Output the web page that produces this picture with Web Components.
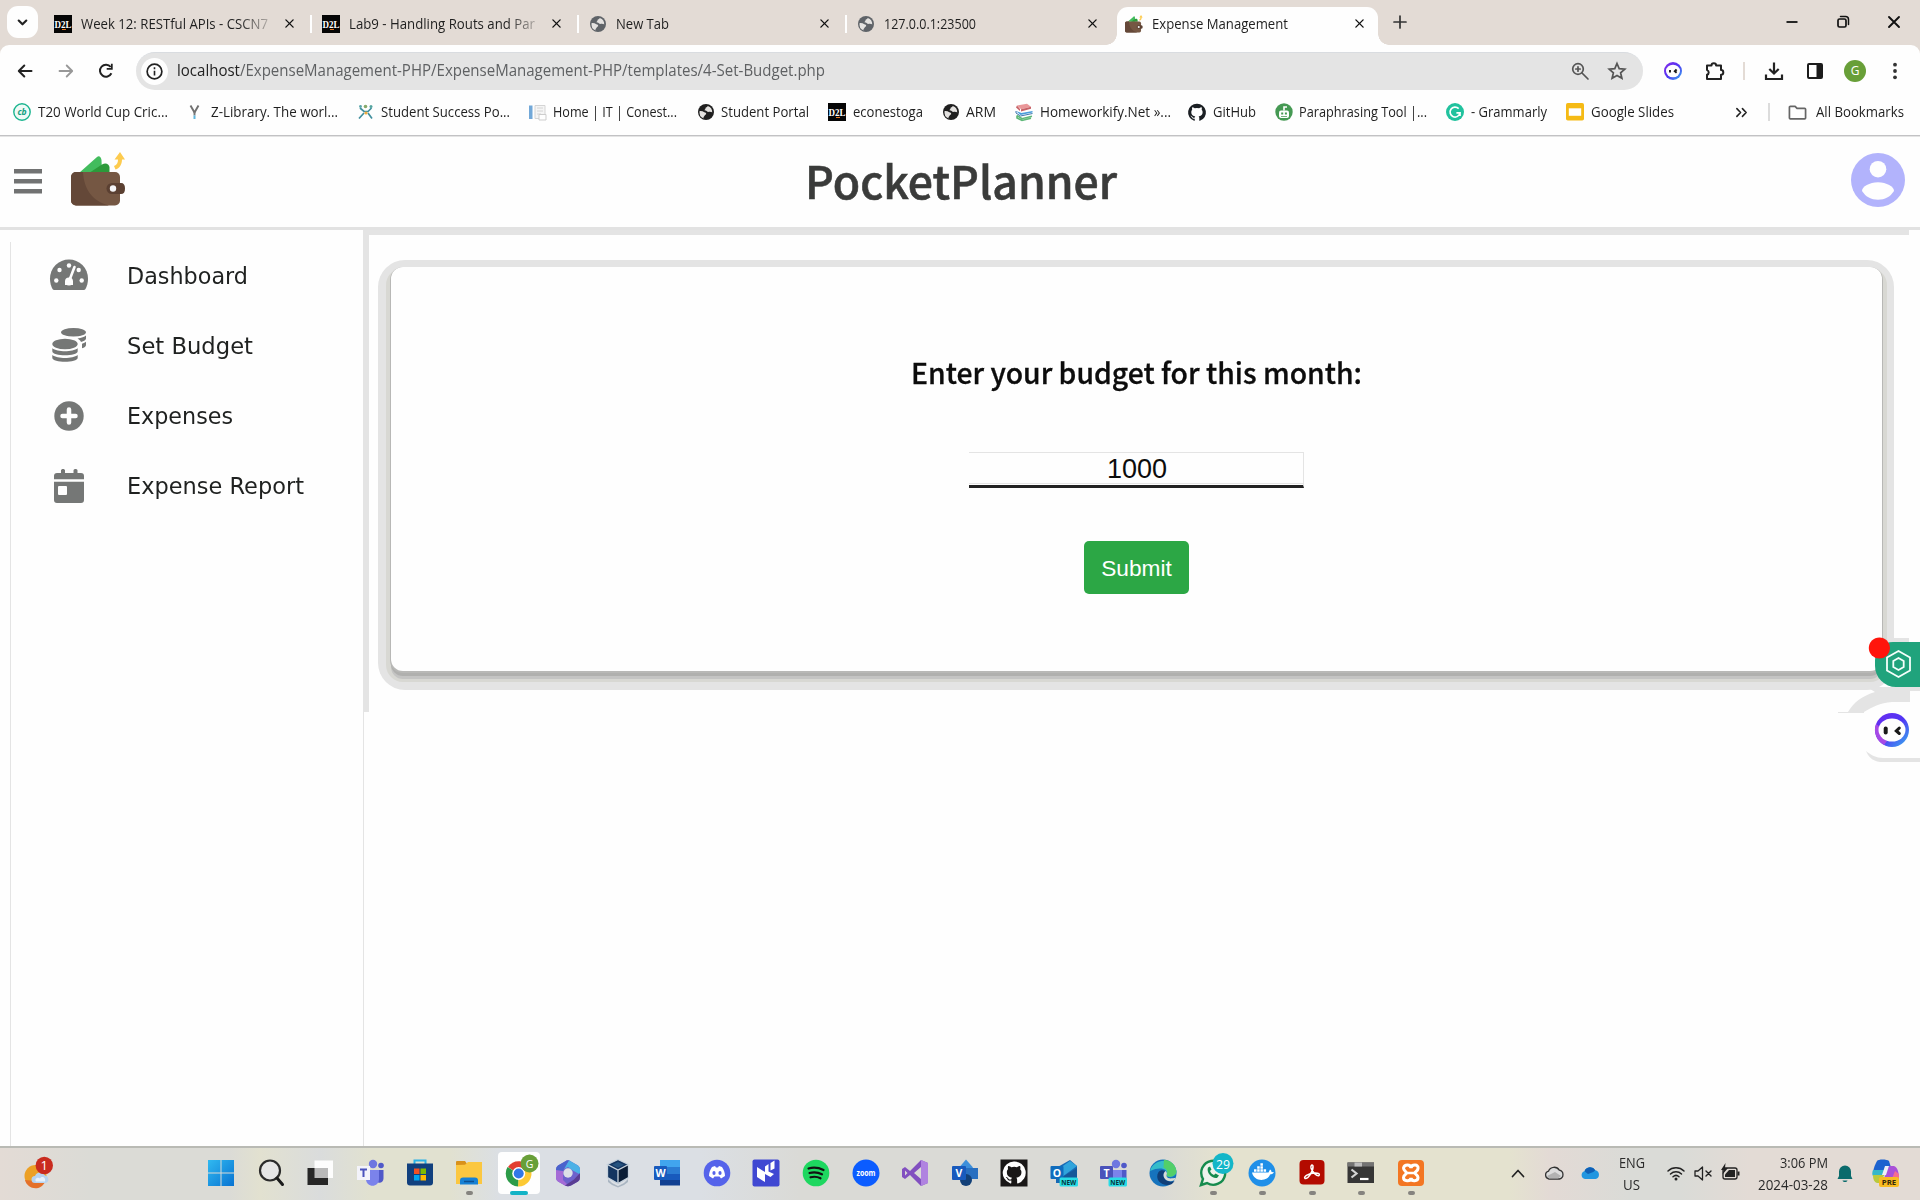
<!DOCTYPE html>
<html lang="en">
<head>
    <meta charset="UTF-8" />
    <meta name="viewport" content="width=device-width, initial-scale=1.0" />
    <title>Expense Management</title>
    <style>
        html, body {
            margin: 0;
            height: 100%;
            overflow: hidden;
            background: #fefefe;
            font-family: "Open Sans", "Noto Sans", sans-serif;
            color: #1f1f1f;
        }
    </style>
</head>
<body>
    <desktop-screen></desktop-screen>

    <!-- Whole screen: browser window above the taskbar -->
    <template id="desktop-screen-template">
        <style>
            :host { display: flex; flex-direction: column; width: 1920px; height: 1200px; }
            page-body { flex: 1; min-height: 0; }
        </style>
        <tab-strip></tab-strip>
        <tool-bar></tool-bar>
        <bookmark-bar></bookmark-bar>
        <page-header></page-header>
        <page-body></page-body>
        <task-bar></task-bar>
    </template>

    <!-- Tab strip -->
    <template id="tab-strip-template">
        <style>
            :host { display: flex; height: 45px; background: #e3dbd5; box-sizing: border-box; }
            .search { width: 31px; height: 32px; margin: 6px 8px 0 7px; border-radius: 11px; background: #fefefe; display: flex; align-items: center; justify-content: center; }
            .new { margin: 13px 0 0 7px; }
            .window { margin-left: auto; display: flex; gap: 33px; padding: 13px 17px 0 0; }
        </style>
        <div class="search"><app-icon name="chevronDown" size="13"></app-icon></div>
        <browser-tab icon="d2l" w="187" fade>Week 12: RESTful APIs - CSCN7</browser-tab>
        <browser-tab icon="d2l" w="186" fade>Lab9 - Handling Routs and Par</browser-tab>
        <browser-tab icon="globe" w="53" tone="#5f6368">New Tab</browser-tab>
        <browser-tab icon="globe" w="92" tone="#5f6368" last>127.0.0.1:23500</browser-tab>
        <browser-tab icon="wallet" w="136" active>Expense Management</browser-tab>
        <app-icon class="new" name="plus" size="18"></app-icon>
        <div class="window">
            <app-icon name="minimize" size="18"></app-icon>
            <app-icon name="restore" size="18"></app-icon>
            <app-icon name="close" size="18"></app-icon>
        </div>
    </template>

    <template id="browser-tab-template">
        <style>
            :host { display: block; width: 267.7px; height: 45px; font-size: 13.8px; }
            .tab { display: flex; align-items: center; height: 38px; margin-top: 7px; box-sizing: border-box; padding: 0 0 5px 8px; }
            .label { margin-left: 9px; flex: 1; overflow: hidden; line-height: 20px; }
            :host([fade]) .label { -webkit-mask-image: linear-gradient(90deg, #000 158px, rgba(0,0,0,.25) 187px); mask-image: linear-gradient(90deg, #000 158px, rgba(0,0,0,.25) 187px); }
            .bar { width: 2px; height: 18px; background: #fefefe; margin: 0 2px 0 14px; }
            :host([last]) .bar, :host([active]) .bar { visibility: hidden; }
            :host([active]) .tab {
                position: relative; width: 261px; background: #fefefe; border-radius: 11px 11px 0 0;
            }
            :host([active]) .tab::before, :host([active]) .tab::after { content: ""; position: absolute; bottom: 0; width: 11px; height: 11px; }
            :host([active]) .tab::before { left: -11px; background: radial-gradient(circle at 0 0, transparent 10.5px, #fefefe 11px); }
            :host([active]) .tab::after { right: -11px; background: radial-gradient(circle at 100% 0, transparent 10.5px, #fefefe 11px); }
            :host([active]) .bar { display: none; }
            :host([active]) .x { margin-right: 12px; }
        </style>
        <div class="tab">
            <app-icon class="fav" size="18"></app-icon>
            <div class="label"><fit-text><slot></slot></fit-text></div>
            <app-icon class="x" name="close" size="13"></app-icon>
            <div class="bar"></div>
        </div>
    </template>

    <!-- Address toolbar -->
    <template id="tool-bar-template">
        <style>
            :host { display: block; height: 45px; background: #e3dbd5; }
            .row { display: flex; align-items: center; height: 45px; background: #fefefe; border-radius: 9px 9px 0 0; box-sizing: border-box; padding: 7px 15px 0 15px; }
            .nav { display: flex; gap: 20.5px; }
            .address { display: flex; align-items: center; width: 1507px; height: 38px; box-sizing: border-box; margin-left: 20px; border-radius: 19px; background: #e4e4e4; border-top: 1px solid #d9dce0; padding: 0 16px 1px 5px; }
            .info { width: 27px; height: 27px; border-radius: 50%; background: #fefefe; display: flex; align-items: center; justify-content: center; }
            .url { flex: 1; margin: -2px 0 0 9px; font-size: 16px; line-height: 22px; color: #5f6163; }
            .url b { font-weight: 400; color: #222; }
            .tools { margin-left: auto; display: flex; align-items: center; }
            .bar { width: 2px; height: 18px; background: #e3dbd5; }
            .g { width: 22px; height: 22px; border-radius: 50%; background: #689f38; color: #fff; font-size: 12px; line-height: 22px; text-align: center; }
        </style>
        <div class="row">
            <div class="nav">
                <app-icon name="back" size="20"></app-icon>
                <app-icon name="forward" size="20"></app-icon>
                <app-icon name="reload" size="20"></app-icon>
            </div>
            <div class="address">
                <div class="info"><app-icon name="info" size="17"></app-icon></div>
                <div class="url"><fit-text w="648"><b>localhost</b>/ExpenseManagement-PHP/ExpenseManagement-PHP/templates/4-Set-Budget.php</fit-text></div>
                <app-icon name="zoomIn" size="18"></app-icon>
                <app-icon name="star" size="20" style="margin-left: 18px"></app-icon>
            </div>
            <div class="tools">
                <app-icon name="bot" size="18"></app-icon>
                <app-icon name="puzzle" size="22" style="margin-left: 21px"></app-icon>
                <div class="bar" style="margin-left: 18px"></div>
                <app-icon name="download" size="20" style="margin-left: 19px"></app-icon>
                <app-icon name="panel" size="18" style="margin-left: 22px"></app-icon>
                <div class="g" style="margin-left: 20px">G</div>
                <app-icon name="dots" size="20" style="margin-left: 19px"></app-icon>
            </div>
        </div>
    </template>

    <!-- Bookmarks -->
    <template id="bookmark-bar-template">
        <style>
            :host { display: flex; align-items: center; height: 47px; box-sizing: border-box; background: #fefefe; border-bottom: 1px solid #e4e4e4; box-shadow: inset 0 -1px 0 #c2c2c4; padding: 0 0 2px 13px; }
            .end { display: flex; align-items: center; margin-left: auto; padding-right: 16px; font-size: 13.8px; }
            .bar { width: 2px; height: 18px; background: #dcdcdc; margin: 0 18px 0 20px; }
            .all { margin: -1px 0 0 9px; line-height: 20px; }
        </style>
        <book-mark icon="cricket" slotw="173" w="130" gap="7">T20 World Cup Cric...</book-mark>
        <book-mark icon="zlib" slotw="171" w="127" gap="11">Z-Library. The worl...</book-mark>
        <book-mark icon="success" slotw="172" w="129" gap="9">Student Success Po...</book-mark>
        <book-mark icon="home" slotw="168" w="124" gap="6">Home | IT | Conest...</book-mark>
        <book-mark icon="globe" slotw="131" w="88" gap="6">Student Portal</book-mark>
        <book-mark icon="d2l" slotw="114" w="70" gap="7">econestoga</book-mark>
        <book-mark icon="globe" slotw="73" w="30" gap="6">ARM</book-mark>
        <book-mark icon="books" slotw="173" w="131" gap="7">Homeworkify.Net »...</book-mark>
        <book-mark icon="github" slotw="87" w="43" gap="7">GitHub</book-mark>
        <book-mark icon="robot" slotw="171" w="128" gap="6">Paraphrasing Tool |...</book-mark>
        <book-mark icon="grammarly" slotw="120" w="76" gap="7">- Grammarly</book-mark>
        <book-mark icon="slides" slotw="120" w="83" gap="7">Google Slides</book-mark>
        <div class="end">
            <app-icon name="more" size="13"></app-icon>
            <div class="bar"></div>
            <app-icon name="folderLine" size="19"></app-icon>
            <div class="all"><fit-text w="88">All Bookmarks</fit-text></div>
        </div>
    </template>

    <template id="book-mark-template">
        <style>
            :host { display: flex; align-items: center; font-size: 13.8px; line-height: 20px; flex: none; }
            fit-text { margin-top: -1px; }
        </style>
        <app-icon size="18"></app-icon>
        <fit-text><slot></slot></fit-text>
    </template>

    <!-- Site header -->
    <template id="page-header-template">
        <style>
            :host { display: grid; grid-template-columns: 1fr auto 1fr; align-items: center; height: 93px; box-sizing: border-box; border-bottom: 3px solid #e2e2e2; background: #fefefe; padding: 0 15px 5px 14px; }
            .left { display: flex; align-items: center; }
            .left app-icon:first-child { margin-top: 2px; }
            .left app-icon + app-icon { margin: -1px 0 0 29px; }
            h1 { margin: 0 0 0 3px; font: 500 45px/60px "Noto Sans CJK SC", "Open Sans", sans-serif; color: #3a3b3a; -webkit-text-stroke: .6px #3a3b3a; }
            .user { justify-self: end; margin-top: 0; }
        </style>
        <div class="left">
            <app-icon name="menu" size="28"></app-icon>
            <app-icon name="wallet" size="55"></app-icon>
        </div>
        <h1><fit-text w="312">PocketPlanner</fit-text></h1>
        <app-icon class="user" name="user" size="54"></app-icon>
    </template>

    <!-- Sidebar, budget card and floating widgets -->
    <template id="page-body-template">
        <style>
            :host { display: flex; position: relative; background: #fefefe; }
            side-menu { width: 363px; flex: none; }
            main { flex: 1; border-left: 1px solid #e4e4e4; }
            section { width: 1545px; height: 482px; box-sizing: border-box; border-left: 5px solid #e4e4e4; border-top: 5px solid #e4e4e4; padding: 25px 0 0 9px; }
            chat-widgets { position: absolute; right: 0; top: 400px; }
        </style>
        <side-menu></side-menu>
        <main>
            <section><budget-card></budget-card></section>
        </main>
        <chat-widgets></chat-widgets>
    </template>

    <template id="side-menu-template">
        <style>
            :host { display: flex; }
            nav { flex: 1; margin: 12px 0 0 10px; border-left: 1px solid #e4e4e4; padding: 3px 0 0 34px; display: flex; flex-direction: column; gap: 10.3px; }
        </style>
        <nav>
            <menu-entry icon="gauge" w="121">Dashboard</menu-entry>
            <menu-entry icon="coins" w="126">Set Budget</menu-entry>
            <menu-entry icon="plusCircle" w="106">Expenses</menu-entry>
            <menu-entry icon="calendar" w="177">Expense Report</menu-entry>
        </nav>
    </template>

    <template id="menu-entry-template">
        <style>
            :host { display: flex; align-items: center; height: 60px; font: 23px/30px "DejaVu Sans", sans-serif; color: #1f2120; }
            app-icon { margin: 0 38px 0 4px; }
            fit-text { margin-top: 1px; }
        </style>
        <app-icon size="40"></app-icon>
        <fit-text><slot></slot></fit-text>
    </template>

    <template id="budget-card-template">
        <style>
            :host { display: block; width: 1516px; height: 430px; box-sizing: border-box; background: #e4e4e4; border-radius: 27px; padding: 7px 12px 19px 13px; }
            form { height: 404px; border-radius: 12px; background: #fefefe; display: flex; flex-direction: column; align-items: center;
                box-shadow: 0 1px 0 1px #b8b8b6, 0 5px 0 0 #b0b0ae, 0 8px 0 0 #c4c4c3, 0 6px 0 5px #d8d8d3; }
            h2 { margin: 85px 0 0; font: 500 28.5px/40px "Noto Sans CJK SC", "Open Sans", sans-serif; color: #0c0c0c; -webkit-text-stroke: .3px #0c0c0c; }
            input { width: 335px; height: 36px; margin: 60px 0 0; box-sizing: border-box; border: 1px solid #e4e4e4; border-left: 0; border-bottom: 3px solid #222; border-radius: 0; outline: 0; padding: 1px 0 0 2px; background: #fefefe; box-shadow: inset 0 -1px 0 #fefefe, inset 0 -2px 0 #e4e4e4; text-align: center; font: 27px/30px "Liberation Sans", Arial, sans-serif; color: #0c0c0c; }
            button { width: 105px; height: 53px; margin: 53px 0 0; border: 0; border-radius: 5px; padding: 1px 0 0; background: #2ca745; color: #fff; font: 22.7px/52px "Liberation Sans", Arial, sans-serif; }
        </style>
        <form>
            <h2><fit-text w="451">Enter your budget for this month:</fit-text></h2>
            <input type="text" value="1000" />
            <button type="button">Submit</button>
        </form>
    </template>

    <template id="chat-widgets-template">
        <style>
            :host { display: block; width: 90px; height: 140px; }
            svg { display: block; }
        </style>
        <svg width="90" height="140" viewBox="1830 630 90 140">
            <path d="M1888 638h21v4h-21zM1910 687h10v4h-10z" fill="#e4e4e4" />
            <path d="M1848 712c6-10 14-16 27-20l-8-5h43v15h-18c-12 1-20 5-28 10z" fill="#e4e4e4" />
            <path d="M1838 712.500h26" stroke="#e4e4e4" />
            <path d="M1866 751c5 4 10 7 17 7h37v4h-40c-8-1-12-6-14-11z" fill="#e4e4e4" />
            <path d="M1920 642h-27a18 18 0 0 0-18 18v6a21 21 0 0 0 21 21h24z" fill="#20a37c" />
            <circle cx="1879.400" cy="648" r="10.600" fill="#ff150c" />
            <path d="M1898.500 651l11.500 6.500v13L1898.500 677l-11.500-6.500v-13zM1898.500 658l5.200 3v6l-5.200 3-5.200-3v-6z" fill="none" stroke="#f5fffb" stroke-width="1.800" />
            <defs>
                <linearGradient id="ring" x1="0" y1="0" x2="1" y2="1">
                    <stop offset="0" stop-color="#6b2df0" /><stop offset=".5" stop-color="#5135f4" /><stop offset="1" stop-color="#36b4ee" />
                </linearGradient>
            </defs>
            <circle cx="1892" cy="730" r="17" fill="url(#ring)" />
            <path d="M1876 724a17 17 0 0 0 8 21l3-4c-5-3-8-8-7-14z" fill="#a64ae6" />
            <ellipse cx="1892" cy="730" rx="13.500" ry="11.500" fill="#fefefe" />
            <path d="M1885.700 728.500v4" stroke="#191919" stroke-width="4" stroke-linecap="round" />
            <path d="M1899.300 728l-3 3 3 2.500" fill="none" stroke="#191919" stroke-width="3" stroke-linecap="round" />
        </svg>
    </template>

    <!-- Windows taskbar -->
    <template id="task-bar-template">
        <style>
            :host { display: flex; align-items: center; height: 54px; box-sizing: border-box; border-top: 2px solid #b9bab4; padding-bottom: 2px; color: #2a2a2a;
                background: linear-gradient(90deg, #e3dbd5 0, #dbdbd6 90px, #dbdbd6 230px, #e2e1d0 260px, #dadcdc 320px, #e1e1d0 370px, #e1e1d0 450px, #dbdfe4 500px, #dbdfe4 700px, #dadad6 800px, #dadad6 1160px, #e4e2cf 1220px, #e4e2cf 1510px, #e3dad5 1550px, #dadbd7 1630px, #dadbd7 1680px, #e3dbd5 1750px); }
            .weather { width: 196.5px; box-sizing: border-box; padding-left: 21px; }
            .apps { display: flex; width: 1239px; }
            .tray { display: flex; align-items: center; flex: 1; margin-left: 73px; font-size: 14.5px; line-height: 22px; }
            .lang { text-align: center; width: 28px; margin-left: 18px; padding-top: 2px; }
            .clock { display: flex; flex-direction: column; align-items: flex-end; width: 73px; margin-left: 15px; padding-top: 1px; }
        </style>
        <div class="weather"><app-icon name="weather" size="34"></app-icon></div>
        <div class="apps">
            <task-item icon="start"></task-item>
            <task-item icon="search"></task-item>
            <task-item icon="taskview"></task-item>
            <task-item icon="teams"></task-item>
            <task-item icon="store"></task-item>
            <task-item icon="explorer" open></task-item>
            <task-item icon="chrome" active></task-item>
            <task-item icon="m365"></task-item>
            <task-item icon="vbox"></task-item>
            <task-item icon="word"></task-item>
            <task-item icon="discord"></task-item>
            <task-item icon="nx"></task-item>
            <task-item icon="spotify"></task-item>
            <task-item icon="zoom"></task-item>
            <task-item icon="vs"></task-item>
            <task-item icon="visio"></task-item>
            <task-item icon="githubBox"></task-item>
            <task-item icon="outlook"></task-item>
            <task-item icon="teamsNew"></task-item>
            <task-item icon="edge"></task-item>
            <task-item icon="whatsapp" open></task-item>
            <task-item icon="docker" open></task-item>
            <task-item icon="acrobat" open></task-item>
            <task-item icon="terminal" open></task-item>
            <task-item icon="xampp" open></task-item>
        </div>
        <div class="tray">
            <app-icon name="chevronUp" size="18"></app-icon>
            <app-icon name="cloudGrey" size="20" style="margin-left: 17px"></app-icon>
            <app-icon name="cloudBlue" size="20" style="margin-left: 16px"></app-icon>
            <div class="lang"><fit-text w="26">ENG</fit-text><br /><fit-text w="17">US</fit-text></div>
            <app-icon name="wifi" size="20" style="margin-left: 20px"></app-icon>
            <app-icon name="mute" size="20" style="margin-left: 7px"></app-icon>
            <app-icon name="battery" size="20" style="margin-left: 7px"></app-icon>
            <div class="clock"><fit-text w="48">3:06 PM</fit-text><fit-text w="70">2024-03-28</fit-text></div>
            <app-icon name="bell" size="20" style="margin-left: 7px"></app-icon>
            <app-icon name="copilot" size="30" style="margin-left: 16px"></app-icon>
        </div>
    </template>

    <template id="task-item-template">
        <style>
            :host { display: flex; flex: 1; justify-content: center; }
            .tile { position: relative; width: 42px; height: 42px; display: flex; align-items: center; justify-content: center; border-radius: 4px; }
            :host([active]) .tile { background: #fefefe; }
            .mark { display: none; position: absolute; bottom: -1px; left: 18px; width: 7px; height: 4px; border-radius: 2px; background: #85837f; }
            :host([open]) .mark { display: block; }
            :host([active]) .mark { display: block; left: 12px; width: 18px; background: #13b3c6; }
        </style>
        <div class="tile"><app-icon size="32"></app-icon><div class="mark"></div></div>
    </template>

    <script>
        const line = 'fill="none" stroke-linecap="round" stroke-linejoin="round"';

        // Small helpers shared by several glyphs
        const d2l = '<rect width="18" height="18" fill="#050505"/><text x="9" y="12.500" text-anchor="middle" textLength="17" lengthAdjust="spacingAndGlyphs" font-family="Liberation Serif" font-weight="700" font-size="9.500" fill="#fff">D2L</text><path d="M8 14.500h4" stroke="#e87722"/>';
        const octocat = '<path d="M9 .8a8.300 8.300 0 0 0-2.700 16.200c.4.100.6-.2.6-.4v-1.700c-2.300.5-2.800-1-2.800-1-.4-1-.9-1.200-.9-1.200-.8-.5 0-.5 0-.5.8.1 1.300.9 1.300.9.700 1.300 2 .9 2.400.7.100-.6.300-.9.500-1.100-1.800-.2-3.800-.9-3.800-4.100 0-.9.300-1.700.9-2.200-.1-.3-.4-1.100.1-2.300 0 0 .7-.2 2.300.9a8 8 0 0 1 4.200 0c1.600-1.100 2.300-.9 2.300-.9.500 1.200.2 2 .1 2.300.5.600.9 1.300.9 2.200 0 3.200-2 3.900-3.800 4.100.3.300.6.800.6 1.500v2.400c0 .2.200.5.600.4A8.300 8.300 0 0 0 9 .8z"/>';
        const cloud = 'M5 16a4 4 0 0 1-.5-7.800 6 6 0 0 1 10.800-1A4.500 4.500 0 0 1 15.500 16z';
        const people = '<circle cx="19" cy="7" r="4.200" fill="#6e77e0"/><circle cx="27" cy="8.500" r="2.800" fill="#5059c9"/><path d="M22 13h7.500v8c0 6-7.500 6-7.500 2z" fill="#5059c9"/><path d="M12 13h13v9c0 9-13 9-13 0z" fill="#7b83eb"/>';

        // name: [viewBox size, markup]
        const ICONS = {
            chevronDown: [12, `<path d="M2.500 4.200L6 7.700l3.500-3.500" ${line} stroke="#222" stroke-width="2"/>`],
            plus: [18, `<path d="M9 3v12M3 9h12" ${line} stroke="#333" stroke-width="1.700"/>`],
            close: [18, `<path d="M4 4l10 10M14 4L4 14" ${line} stroke="#111" stroke-width="1.900"/>`],
            minimize: [18, '<path d="M3.500 9h11" stroke="#111" stroke-width="1.800"/>'],
            restore: [18, `<rect x="4" y="6" width="8" height="8" rx="1.500" ${line} stroke="#111" stroke-width="1.700"/><path d="M6.500 3.500h5a3 3 0 0 1 3 3v5" ${line} stroke="#111" stroke-width="1.500"/>`],
            back: [20, `<path d="M16.500 10H4M9.300 4.500L3.800 10l5.500 5.500" ${line} stroke="#222" stroke-width="2"/>`],
            forward: [20, `<path d="M3.500 10H16M10.700 4.500l5.500 5.500-5.500 5.500" ${line} stroke="#989898" stroke-width="1.800"/>`],
            reload: [20, '<path d="M15.400 12.300A6 6 0 1 1 14.700 6" fill="none" stroke="#222" stroke-width="2"/><path d="M16.700 2.800v6h-6v-1.800h4.200V2.800z" fill="#222"/>'],
            info: [18, '<circle cx="9" cy="9" r="7.800" fill="none" stroke="#222" stroke-width="1.800"/><path d="M9 8.200v5M9 4.600v1.900" stroke="#222" stroke-width="1.700"/>'],
            zoomIn: [18, `<circle cx="7" cy="7" r="5.300" ${line} stroke="#555" stroke-width="1.700"/><path d="M11 11l6 6M7 4.800v4.400M4.800 7h4.400" ${line} stroke="#555" stroke-width="1.700"/>`],
            star: [20, '<path d="M10 2.500l2.200 5.100 5.600.5-4.200 3.700 1.300 5.500L10 14.400l-4.900 2.900 1.300-5.500-4.200-3.700 5.600-.5z" fill="none" stroke="#555" stroke-width="1.700"/>'],
            bot: [18, '<defs><linearGradient id="b" x1="0" y1="0" x2="1" y2="1"><stop offset="0" stop-color="#8a2be8"/><stop offset=".5" stop-color="#5135f4"/><stop offset="1" stop-color="#36b4ee"/></linearGradient></defs><circle cx="9" cy="9" r="9" fill="url(#b)"/><ellipse cx="9" cy="9" rx="7" ry="6.300" fill="#fefefe"/><path d="M6 8v2.600M12.600 7.500L10.800 9.300l1.800 1.500" fill="none" stroke="#191919" stroke-width="1.900"/>'],
            puzzle: [22, `<path d="M4 5.500h4.500a2.300 2.300 0 0 1 4.600 0H18v4.600a2.300 2.300 0 0 1 0 4.600V19H4v-4.300a2.400 2.400 0 0 0 0-4.600z" ${line} stroke="#222" stroke-width="2"/>`],
            download: [20, '<path d="M10 1.500v10.500M5.300 8l4.700 4.500L14.700 8M2 13.500V18h16v-4.500" fill="none" stroke="#222" stroke-width="2.200"/>'],
            panel: [18, '<rect x="2" y="2" width="14" height="14" rx="1" fill="none" stroke="#1c1c1c" stroke-width="2"/><path d="M10.500 2H16v14h-5.500z" fill="#1c1c1c"/>'],
            dots: [20, '<circle cx="10" cy="3.700" r="1.900" fill="#333"/><circle cx="10" cy="10" r="1.900" fill="#333"/><circle cx="10" cy="16.300" r="1.900" fill="#333"/>'],
            more: [14, `<path d="M2 2.800L6 7l-4 4.200M8 2.800L12 7l-4 4.200" ${line} stroke="#222" stroke-width="1.700"/>`],
            folderLine: [20, `<path d="M1.500 4.500a1 1 0 0 1 1-1h5l2 2.200h8a1 1 0 0 1 1 1v9a1 1 0 0 1-1 1h-15a1 1 0 0 1-1-1z" ${line} stroke="#666" stroke-width="1.800"/>`],
            d2l: [18, d2l],
            globe: [18, '<circle cx="9" cy="9" r="8" fill="currentColor"/><path d="M2.600 8c1.900-.2 3.500.2 4.700 1.200 1.500.1 2.300 1 1.700 2.200-1.400.2-1.300 1.500-2 2-.4.700-.9 1.400-.3 2A6.600 6.600 0 0 1 2.600 8zM10.800 2.900c-.6 1.300-1.900 1-2.300 2.200.5 1.300-1.300 1.400-.8 2.400 1.600-.2 2 .5 2.700 1.300 1.600.3 2.800-.4 4.800.8a6.600 6.600 0 0 0-4.400-6.700z" fill="#e4e2e0"/>'],
            wallet: [55, '<path d="M8 21L26 5c2-2 4 0 4.500 3L31 21z" fill="#42bc5d"/><path d="M18 21L31 12.500c4-2.500 7.500 0 7.500 3V21z" fill="#2c9a3a"/><path d="M43 14c3-1 4-3.500 4-6.500h-3.500L49 0l5 7.500h-3c0 5-2.500 9-6.500 10z" fill="#fdcb4e"/><rect y="20" width="49" height="33.500" rx="5" fill="#755743"/><path d="M5 20h7c1 17 9 29 26 33.500H5a5 5 0 0 1-5-5V25a5 5 0 0 1 5-5z" fill="#644838"/><path d="M41 31h9q4 0 4 5.500t-4 5.500h-9a5.500 5.500 0 0 1 0-11z" fill="#5b4032"/><circle cx="42" cy="36.500" r="3.200" fill="#f5f5f7"/>'],
            cricket: [18, '<circle cx="9" cy="9" r="8.200" fill="#effaf7" stroke="#1bb58f" stroke-width="1.400"/><text x="9" y="12" text-anchor="middle" font-family="Open Sans" font-style="italic" font-weight="700" font-size="8.500" fill="#10a07f">cb</text>'],
            zlib: [18, '<g transform="translate(2.500)"><path d="M2 2.500L6 9.500l4-7" fill="none" stroke="#707070" stroke-width="1.900"/><path d="M6 9v3.500" stroke="#777" stroke-width="1.900"/><path d="M6 12.500v3.500" stroke="#5db6df" stroke-width="2"/></g>'],
            success: [18, '<path d="M2 15.500l5-5.500M11 10l4 5.500M3 5l4 3.500h4l3.500-3.500" fill="none" stroke="#418f9d" stroke-width="1.700"/><circle cx="8.500" cy="3.500" r="1.800" fill="#86a96b"/><circle cx="3.500" cy="3.500" r="1.400" fill="#5ba5aa"/><circle cx="14" cy="3.500" r="1.500" fill="#54a49e"/><circle cx="9" cy="10" r="1.600" fill="#f0ab3d"/>'],
            home: [18, '<path d="M0 2.500h3.500V16H0z" fill="#72a8d8"/><path d="M6 2.500h10v13H6zM8 5h6M8 8h6M8 11h4" fill="#f5f5f5" stroke="#d4d4d4"/><path d="M10 11.500h7V17h-7z" fill="#fefefe" stroke="#cdcdcd"/>'],
            books: [18, '<path d="M2 2.500L12 .8l4 3-10 2.400z" fill="#e99698"/><path d="M2 2.500L5 6v2L1 4.500zM6 6.200l10-2.400v2L6 8.500z" fill="#c76267"/><path d="M1 8l4.500 4 12-2.500V8L6.500 10z" fill="#499cdc"/><path d="M1 8v2l4.500 3 12-2.500" fill="none" stroke="#3d77ad"/><path d="M2 12.500l5 3.200 10-2.500M2 12.500V15l5 2.500 9-2.300" fill="none" stroke="#5fb879" stroke-width="1.600"/>'],
            github: [18, `<g fill="#1b1f23" transform="translate(-.5 0) scale(1.050)">${octocat}</g>`],
            robot: [18, '<circle cx="9" cy="9" r="8.700" fill="#459953"/><rect x="4" y="7.500" width="10" height="7.500" rx="2" fill="#fff"/><path d="M9 7.500V4h3" fill="none" stroke="#fff" stroke-width="1.600"/><path d="M6.200 9.500h2v2h-2zM9.900 9.500h2v2h-2zM6 13h6v.8H6z" fill="#459953"/>'],
            grammarly: [18, '<circle cx="9" cy="9" r="9" fill="#21c29e"/><path d="M12.700 5.600a5 5 0 1 0 1.300 4.200h-3.600M14 9.500v3.600" fill="none" stroke="#fff" stroke-width="1.700"/>'],
            slides: [18, '<rect width="18" height="17.500" rx="1.800" fill="#f5ba15"/><path d="M2.800 5.300h12.400v7.500H2.800z" fill="#fefefe"/>'],
            menu: [28, '<path d="M0 2h28v4.500H0zM0 12h28v4.500H0zM0 22h28v4.500H0z" fill="#717272"/>'],
            user: [54, '<circle cx="27" cy="27" r="27" fill="#b2b3fc"/><circle cx="27" cy="16.200" r="8.300" fill="#fefefe"/><path d="M27 29.300c8.500 0 16 4.500 16 8.700-4 6-9 8.700-16 8.700S15 44 11 38c0-4.200 7.500-8.700 16-8.700z" fill="#fefefe"/>'],
            gauge: [40, '<path d="M1 23.500a19 19 0 0 1 38 0c0 4-1 7.500-2.500 10.500-.4.700-1 1-1.700 1H5.200c-.7 0-1.300-.3-1.700-1C2 31 1 27.500 1 23.500z" fill="#757776"/><g fill="#fefefe"><circle cx="20" cy="10.500" r="2.200"/><circle cx="10.500" cy="15" r="2.200"/><circle cx="29.700" cy="15" r="2.200"/><circle cx="7.300" cy="25.500" r="2.200"/><circle cx="32.700" cy="25.500" r="2.200"/><circle cx="20" cy="26.500" r="4"/><path d="M16 26h8v4h-8z"/></g><path d="M20.500 25l5-13" stroke="#fefefe" stroke-width="2.600" stroke-linecap="round"/>'],
            coins: [40, '<g fill="#757776"><ellipse cx="24.500" cy="7.300" rx="12.500" ry="4.300"/><path d="M28.500 13.500c4-.5 7-1.500 8.500-2.900v2.900c0 1.500-2 2.700-5 3.400-.7-1.500-2-2.600-3.500-3.400zM33 18.800c1.800-.5 3.200-1.200 4-2v3.200c0 1.500-1.600 2.700-4 3.300z"/><ellipse cx="16" cy="19" rx="12.700" ry="5.300"/><path d="M3.300 23.300c5 4 20.400 4 25.400 0v2.900c0 5.500-25.400 5.500-25.400 0zM3.300 30c5 4 20.400 4 25.400 0v2.700c0 5.500-25.400 5.500-25.400 0z"/></g>'],
            plusCircle: [40, '<circle cx="20" cy="20" r="14.700" fill="#757776"/><path d="M20 13.500v13M13.500 20h13" stroke="#fefefe" stroke-width="4.500" stroke-linecap="round"/>'],
            calendar: [40, '<path d="M12 4.500c0-2 4-2 4 0V7h8.500V4.500c0-2 4-2 4 0V7H32a3 3 0 0 1 3 3v3.300H5V10a3 3 0 0 1 3-3h4zM5 15.700h30v18.300a3 3 0 0 1-3 3H8a3 3 0 0 1-3-3z" fill="#757776"/><rect x="9" y="20" width="9" height="9" rx="1" fill="#fefefe"/>'],
            weather: [34, '<circle cx="14.500" cy="20" r="11" fill="#eca025"/><path d="M4 24c2 9 15 12 20 2z" fill="#e4702a"/><path d="M14 27a3.500 3.500 0 0 1 0-7 5.500 5.500 0 0 1 10-.5c4 0 5 7.500 0 7.500z" fill="#b7d3f0"/><path d="M15 25.500c-2-3 2-5 4-3 2-3 6-1 5 3z" fill="#e8f1fb"/><circle cx="23.300" cy="9.500" r="8.700" fill="#c92b1f"/><text x="23.300" y="14" text-anchor="middle" font-family="Open Sans" font-size="13" fill="#fff">1</text>'],
            start: [32, '<defs><linearGradient id="s" x1="0" y1="0" x2="1" y2="1"><stop stop-color="#31b9f0"/><stop offset="1" stop-color="#0873d2"/></linearGradient></defs><path d="M3 3h12.500v12.500H3zM16.500 3H29v12.500H16.500zM3 16.500h12.500V29H3zM16.500 16.500H29V29H16.500z" fill="url(#s)"/>'],
            search: [32, `<circle cx="15" cy="13.500" r="10" fill="#e6e6e6" stroke="#2b2b2b" stroke-width="2.200"/><path d="M22 21l5.500 6.500" ${line} stroke="#1b1b1b" stroke-width="3"/>`],
            taskview: [32, '<path d="M10.500 3.500H29v17.500H10.500z" fill="#fdfdfd"/><path d="M3.500 11H24v17H3.500z" fill="#262626"/><path d="M10.500 11H24v10H10.500z" fill="#b9b9b9"/>'],
            teams: [32, people + '<path d="M3 9h13v14H3z" fill="#f3f3fa"/><path d="M6 12.500h7M9.500 12.500V20" stroke="#4b53bc" stroke-width="2"/>'],
            store: [32, '<path d="M10.500 8V3.500h11V8" fill="none" stroke="#2bb2e8" stroke-width="2"/><path d="M3 6.500h26v19a3 3 0 0 1-3 3H6a3 3 0 0 1-3-3z" fill="#11407e"/><path d="M10 11.500h5.500V17H10z" fill="#f25022"/><path d="M16.500 11.500H22V17h-5.500z" fill="#7fba00"/><path d="M10 18h5.500v5.500H10z" fill="#00a4ef"/><path d="M16.500 18H22v5.500h-5.500z" fill="#ffb900"/>'],
            explorer: [32, '<path d="M3 5a1 1 0 0 1 1-1h8l3 4H3z" fill="#d9911a"/><path d="M3 8l9-.2L15 5h14v22H3z" fill="#fbc740"/><path d="M7 27.500v-4a3 3 0 0 1 3-3h12a3 3 0 0 1 3 3v4z" fill="#1680d4"/><path d="M11 24.500h10" stroke="#0c4f92" stroke-width="1.500"/>'],
            chrome: [32, '<path d="M15.500 17L5 10a13 13 0 0 1 22.500 1.500z" fill="#e23d30"/><path d="M15.500 17l12-5.500A13 13 0 0 1 15 29.500z" fill="#fcc934"/><path d="M15.500 17L15 29.500A13 13 0 0 1 4.500 10z" fill="#2c9b48"/><circle cx="15.700" cy="16.500" r="6.500" fill="#fff"/><circle cx="15.700" cy="16.500" r="5" fill="#3178e6"/><circle cx="26.500" cy="6.500" r="9" fill="#689f38"/><text x="26.500" y="10.500" text-anchor="middle" font-family="Open Sans" font-size="10.500" fill="#fff">G</text>'],
            m365: [32, '<path d="M13 4.500Q16 2 19 4.500l7 4q2 1.500 2 4v8q0 2.500-2 4l-7 4q-3 1.500-6 0l-7-4q-2-1.500-2-4v-8q0-2.500 2-4z" fill="#6e62cc"/><path d="M17 3.300q1 .4 2 1.200l7 4q2 1.500 2 4v5L20 13l-4-3-4 2z" fill="#4cb1e6"/><path d="M17 3.300L13 10l-3 5v8l-6-3v-7.500q0-2.500 2-4l7-4q2-1.600 4-1.200z" fill="#4a63cc"/><path d="M4 13v7.500q0 2.500 2 4l7 4q2 1 4 .5l-6-6V14z" fill="#a56bd6"/><path d="M28 16v4.500q0 2.500-2 4l-7 4q-3 1.500-6 0l9-6z" fill="#5a3d93"/><circle cx="16" cy="16" r="4.700" fill="#dde0e6"/>'],
            vbox: [32, '<path d="M6 22l4 4 6 3 6-3 4-4v3l-4 3-6 2.500L10 28l-4-3z" fill="#aab6c2"/><path d="M16 2.500l10.500 5v13L16 26.500l-10.500-6v-13z" fill="#143560"/><path d="M26.500 7.500L16 13v13.500l10.500-6z" fill="#0a1d36"/><path d="M16 5l6 2.800-6 3-6-3z" fill="#24527f"/><path d="M5.500 7.500l10.500-5 10.500 5L16 13zM16 13v13.500M5.500 7.500v13l10.500 6 10.500-6v-13" fill="none" stroke="#c8d3dd" stroke-width="1.300"/>'],
            word: [32, '<path d="M9 3h20v7H9z" fill="#41a5ee"/><path d="M9 10h20v7H9z" fill="#2b7cd3"/><path d="M9 17h20v6H9z" fill="#185abd"/><path d="M9 23h20v5.500H9z" fill="#103f91"/><rect x="3" y="9" width="13" height="14" rx="1" fill="#185abd"/><text x="9.500" y="20" text-anchor="middle" font-family="Open Sans" font-weight="700" font-size="10.500" fill="#fff">W</text>'],
            discord: [32, '<circle cx="16" cy="16" r="13.300" fill="#5563ea"/><path d="M11 10l3-1 1 1.500h2L18 9l3 1c2 3 3 6 3 9l-4 2.500-1.500-2h-5l-1.500 2L8 19c0-3 1-6 3-9z" fill="#fff"/><ellipse cx="13" cy="16" rx="1.600" ry="1.900" fill="#5563ea"/><ellipse cx="19" cy="16" rx="1.600" ry="1.900" fill="#5563ea"/>'],
            nx: [32, '<rect x="2.500" y="2.500" width="27" height="27" rx="2" fill="#4048d2"/><path d="M7 10l8 5v10l-8-5zM15 9.500L18.500 7v7.500l5.500 2.500-3.500 3-5.500-3z" fill="#fff"/><path d="M20.500 6l4-2.500v8l-4 2z" fill="#fff"/>'],
            spotify: [32, `<circle cx="16" cy="16" r="13.300" fill="#1ed760"/><path d="M8.500 11.500c5-1.500 10-1 15 1.500M9.500 16c4-1.200 8.500-.8 12.500 1.300M10.500 20.300c3.500-1 7-.6 10 1" ${line} stroke="#121212" stroke-width="2.200"/>`],
            zoom: [32, '<circle cx="16" cy="16" r="13.500" fill="#0b5cff"/><text x="16" y="18.500" text-anchor="middle" textLength="19" lengthAdjust="spacingAndGlyphs" font-family="Open Sans" font-weight="700" font-size="8" fill="#fff">zoom</text>'],
            vs: [32, '<path d="M22 3l7 3v20l-7 3L11 18l-5 4-3-2v-8l3-2 5 4z" fill="#8250c0"/><path d="M22 3l7 3v20l-7 3z" fill="#b083e0"/><path d="M22 10v12l-7-6zM6 13.500v5L8.500 16z" fill="#dadad6"/>'],
            visio: [32, '<path d="M17 2.500l7 8-7 6-6-7z" fill="#3d8fdb"/><path d="M17 11h12v11H17z" fill="#286fc0"/><circle cx="17" cy="23" r="6" fill="#124078"/><rect x="3" y="9" width="14" height="14" rx="1" fill="#185abd"/><text x="10" y="20" text-anchor="middle" font-family="Open Sans" font-weight="700" font-size="10.500" fill="#fff">V</text>'],
            githubBox: [32, `<path d="M2.500 2.500h27v27h-27z" fill="#191717"/><g fill="#fefefe" transform="translate(4 3.500) scale(1.350)">${octocat}</g>`],
            outlook: [32, '<path d="M8 11L22 3l7 6v17H8z" fill="#1769b5"/><path d="M9 13L22 4l7 5-15 11z" fill="#30a4dc"/><path d="M11 22L29 11v15H11z" fill="#155899"/><rect x="2.500" y="9" width="13" height="13" rx="1" fill="#0f6cbd"/><text x="9" y="19.500" text-anchor="middle" font-family="Open Sans" font-weight="700" font-size="10.500" fill="#fff">O</text><rect x="11.500" y="20.500" width="18.500" height="9" rx="1.500" fill="#28dce6"/><text x="20.800" y="28" text-anchor="middle" textLength="15" lengthAdjust="spacingAndGlyphs" font-family="Open Sans" font-weight="700" font-size="7.500" fill="#07373b">NEW</text>'],
            teamsNew: [32, people + '<rect x="3" y="9" width="13" height="13" rx="1" fill="#4a52ba"/><text x="9.500" y="19.500" text-anchor="middle" font-family="Open Sans" font-weight="700" font-size="10.500" fill="#fff">T</text><rect x="11.500" y="20.500" width="18.500" height="9" rx="1.500" fill="#28dce6"/><text x="20.800" y="28" text-anchor="middle" textLength="15" lengthAdjust="spacingAndGlyphs" font-family="Open Sans" font-weight="700" font-size="7.500" fill="#07373b">NEW</text>'],
            edge: [32, '<circle cx="16" cy="16" r="13.500" fill="#1673bd"/><path d="M3 14C6 2 26-1 29.500 14c0 7-10 7-10 4 2-6-6-9-16.500-4z" fill="#35bcca"/><path d="M17 2.700c9 1 12 7 12.500 12-1 6-10 6-10 3 2-3 0-6-3-7z" fill="#52cf69"/><path d="M11.500 15c-4 7 2 13 9 13 3 0 5-1 7-4-5 2-11-1-11-6 0-2 1-3 2-4-3-1-5-1-7 1z" fill="#103f78"/><path d="M16.500 18c0 5 6 8 11 5l1-2c-3 0-9 2-9-3 1-2 0-3-1-4-1 1-2 2-2 4z" fill="#d9dcd6"/>'],
            whatsapp: [32, '<path d="M4 28l2-6a12 12 0 1 1 4 4z" fill="#edf3ec" stroke="#158b4d" stroke-width="2.400"/><path d="M11 10.500c-2 5 4 11.500 9 10.500l2-2.500-3.500-2-1.500 1.500c-2-.8-3.200-2-4-4l1.500-1.500L13 9.500z" fill="#158b4d"/><circle cx="26" cy="6.500" r="10.500" fill="#14b6c8"/><text x="26" y="11.500" text-anchor="middle" font-family="Open Sans" font-size="13" textLength="14" lengthAdjust="spacingAndGlyphs" fill="#fff">29</text>'],
            docker: [32, '<circle cx="16" cy="16" r="13.500" fill="#1f8fe8"/><path d="M6 15.500h16.500l1.500-3c1 .5 1.500 1.500 1.500 2.500l2.500.3c-1 1.700-2.500 2.200-4 2.200-2 7-16 8-18-2z" fill="#fff"/><path d="M8 12.300h2.500v2.500H8zM11.200 12.300h2.500v2.500h-2.500zM14.400 12.300h2.500v2.500h-2.500zM17.600 12.300h2.500v2.500h-2.500zM11.200 9.300h2.500v2.500h-2.500zM14.400 9.300h2.500v2.500h-2.500zM14.400 6.300h2.500v2.500h-2.500z" fill="#fff"/>'],
            acrobat: [32, '<rect x="3.500" y="3" width="25" height="24.500" rx="4" fill="#b30b00"/><path d="M9 21.500c-2-2 4-5 9-5.500 5-.4 6 1.500 5 2.500-2 1-7-3.500-8-7.500-.6-3 1.500-4 2-2 .5 4-4 13-8 12.500z" fill="none" stroke="#fff" stroke-width="1.500"/>'],
            terminal: [32, '<path d="M2.500 5.500H29V26H2.500z" fill="#363636"/><path d="M2.500 5.500H29v4H2.500z" fill="#737373"/><path d="M9.500 5.500H17v4H9.500z" fill="#bdbdbd"/><path d="M6.500 12.500l5 4-5 4" fill="none" stroke="#d5d5d5" stroke-width="2.200"/><path d="M15 22h8.500" stroke="#fff" stroke-width="2.200"/>'],
            xampp: [32, '<rect x="3" y="3" width="26" height="26" rx="4" fill="#f37623"/><path d="M8.500 11c1-4 7-4 7.500 0 .5-4 8-4 7 .5-.3 3-3 3-3 4.500s3 1.500 3 4.500c0 4-6.500 4.500-7 .5-.5 4-7.500 3.500-7.500-.5 0-3 3-3 3-4.500s-3-2-3-5z" fill="none" stroke="#fff" stroke-width="3"/><path d="M11.500 16H20" stroke="#fff" stroke-width="2.500"/>'],
            chevronUp: [18, `<path d="M3.500 12.500L9 6.500l5.500 6" ${line} stroke="#222" stroke-width="1.700"/>`],
            cloudGrey: [20, `<path d="${cloud}" fill="#dcdcdc" stroke="#333" stroke-width="1.300"/><path d="M3 13l8-4 6 4-3 2.500H5z" fill="#b2b2b2"/>`],
            cloudBlue: [20, `<path d="${cloud}" fill="#2196e0"/><path d="M4.500 8.200a6 6 0 0 1 10.800-1l-2 1.800L8 11z" fill="#0f60b6"/>`],
            wifi: [20, `<path d="M2 8a11.500 11.500 0 0 1 16 0M4.500 11a8 8 0 0 1 11 0M7 13.700a4.500 4.500 0 0 1 6 0" ${line} stroke="#222" stroke-width="1.500"/><circle cx="10" cy="16" r="1.500" fill="#222"/>`],
            mute: [20, `<path d="M2 8h3l4.500-4v13L5 13H2z" ${line} stroke="#222" stroke-width="1.300"/><path d="M13 8l5 5M18 8l-5 5" ${line} stroke="#222" stroke-width="1.400"/>`],
            battery: [20, '<rect x="3" y="5" width="14" height="11" rx="2" fill="none" stroke="#222" stroke-width="1.300"/><path d="M9 7h6v7H5v-2.500z" fill="#222"/><path d="M18.500 8.500v4" stroke="#222" stroke-width="2"/><path d="M5.500 0L1 7h2.500L2.500 11.500 8 5H5z" fill="#222"/>'],
            bell: [20, '<path d="M2.500 16l1.500-3V8.500a6 6 0 0 1 12 0V13l1.500 3z" fill="#0b6b6c"/><path d="M7.500 17.500h5c-.8 2-4.200 2-5 0z" fill="#0b6b6c"/>'],
            copilot: [30, '<path d="M6 3c1-2 10-2 12 0l4 13H3C1 13 4 7 6 3z" fill="#1c62cf"/><path d="M2 12h13l-2 6H2c-1-1-1-4 0-6z" fill="#35b7c9"/><path d="M2 17h11l-3 8H6c-3-1-4-4-4-8z" fill="#b9c93e"/><path d="M18 8h5c4 1 6 10 4 15H12z" fill="#a951d8"/><path d="M24 13l4 3v7h-8z" fill="#f56d91"/><path d="M14 8h4l-3 9h-4z" fill="#eef1f5"/><rect x="8" y="19" width="20" height="10" rx="2" fill="#f9bc22"/><text x="18" y="27" text-anchor="middle" font-family="Open Sans" font-weight="700" font-size="7.800" fill="#33270a">PRE</text>'],
        };

        // Base class: clones the template that carries the element's name
        class ShadowComponent extends HTMLElement {
            constructor() {
                super();
                this.attachShadow({ mode: 'open' });
            }

            connectedCallback() {
                const template = document.getElementById(`${this.localName}-template`);
                this.shadowRoot.replaceChildren(template.content.cloneNode(true));
                this.render();
            }

            render() {}

            part$(selector) {
                return this.shadowRoot.querySelector(selector);
            }
        }

        class DesktopScreen extends ShadowComponent {}
        class TabStrip extends ShadowComponent {}
        class ToolBar extends ShadowComponent {}
        class BookmarkBar extends ShadowComponent {}
        class PageHeader extends ShadowComponent {}
        class PageBody extends ShadowComponent {}
        class SideMenu extends ShadowComponent {}
        class BudgetCard extends ShadowComponent {}
        class ChatWidgets extends ShadowComponent {}
        class TaskBar extends ShadowComponent {}

        class BrowserTab extends ShadowComponent {
            render() {
                const icon = this.part$('.fav');
                icon.setAttribute('name', this.getAttribute('icon'));
                icon.style.color = this.getAttribute('tone') || '';
                this.part$('fit-text').setAttribute('w', this.getAttribute('w'));
            }
        }

        class BookMark extends ShadowComponent {
            render() {
                this.style.width = `${this.getAttribute('slotw')}px`;
                // the Z-Library and Success icons are narrower than the others
                const narrow = { zlib: 14, success: 15 }[this.getAttribute('icon')];
                const icon = this.part$('app-icon');
                icon.setAttribute('name', this.getAttribute('icon'));
                if (narrow) icon.style.width = `${narrow}px`;
                const text = this.part$('fit-text');
                text.setAttribute('w', this.getAttribute('w'));
                text.style.marginLeft = `${this.getAttribute('gap')}px`;
            }
        }

        class MenuEntry extends ShadowComponent {
            render() {
                this.part$('app-icon').setAttribute('name', this.getAttribute('icon'));
                this.part$('fit-text').setAttribute('w', this.getAttribute('w'));
            }
        }

        class TaskItem extends ShadowComponent {
            render() {
                this.part$('app-icon').setAttribute('name', this.getAttribute('icon'));
            }
        }

        class AppIcon extends HTMLElement {
            constructor() {
                super();
                this.attachShadow({ mode: 'open' });
            }

            connectedCallback() {
                const size = this.getAttribute('size');
                const [box, markup] = ICONS[this.getAttribute('name')];
                this.shadowRoot.innerHTML = `
                    <style>
                        :host { display: block; flex: none; width: ${size}px; height: ${size}px; }
                        svg { display: block; overflow: visible; }
                    </style>
                    <svg width="${size}" height="${size}" viewBox="0 0 ${box} ${box}">${markup}</svg>`;
            }
        }

        // One line of text squeezed or stretched to a set width
        class FitText extends HTMLElement {
            constructor() {
                super();
                this.attachShadow({ mode: 'open' });
            }

            connectedCallback() {
                const width = Number(this.getAttribute('w'));
                this.shadowRoot.innerHTML = `
                    <style>
                        :host { display: inline-block; width: ${width}px; white-space: nowrap; vertical-align: top; text-align: left; }
                        span { display: inline-block; vertical-align: top; transform-origin: 0 50%; }
                    </style>
                    <span><slot></slot></span>`;
                const span = this.shadowRoot.querySelector('span');
                const natural = span.getBoundingClientRect().width;
                if (natural) span.style.transform = `scaleX(${width / natural})`;
            }
        }

        customElements.define('desktop-screen', DesktopScreen);
        customElements.define('tab-strip', TabStrip);
        customElements.define('tool-bar', ToolBar);
        customElements.define('bookmark-bar', BookmarkBar);
        customElements.define('page-header', PageHeader);
        customElements.define('page-body', PageBody);
        customElements.define('side-menu', SideMenu);
        customElements.define('budget-card', BudgetCard);
        customElements.define('chat-widgets', ChatWidgets);
        customElements.define('task-bar', TaskBar);
        customElements.define('browser-tab', BrowserTab);
        customElements.define('book-mark', BookMark);
        customElements.define('menu-entry', MenuEntry);
        customElements.define('task-item', TaskItem);
        customElements.define('app-icon', AppIcon);
        // last, so that the text is laid out when it is measured
        customElements.define('fit-text', FitText);
    </script>
</body>
</html>
